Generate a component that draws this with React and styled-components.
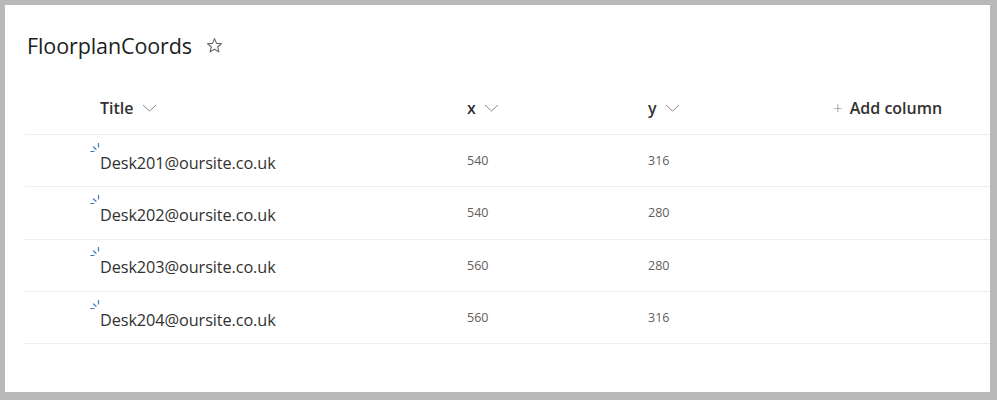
import React from "react";
import styled, { createGlobalStyle } from "styled-components";

const Global = createGlobalStyle`
  html, body { margin: 0; padding: 0; background: #b9b9b9; }
  body { font-family: "Open Sans", "Noto Sans", Arial, sans-serif; }
`;

const Frame = styled.div`
  width: 997px;
  height: 400px;
  box-sizing: border-box;
  padding: 5px 7px 8px 5px;
  background: #b9b9b9;
`;

const Panel = styled.div`
  background: #ffffff;
  height: 100%;
  box-sizing: border-box;
  padding: 25px 0 0 20px;
  display: flex;
  flex-direction: column;
`;

const Heading = styled.div`
  display: flex;
  align-items: center;
  gap: 14px;
  padding-left: 2px;
  height: 30px;
`;

const HeadingText = styled.h1`
  margin: 0;
  font-size: 21.5px;
  font-weight: 400;
  color: #201f1e;
  letter-spacing: -0.1px;
`;

const Table = styled.div`
  margin-top: 27px;
  display: flex;
  flex-direction: column;
`;

const Row = styled.div`
  display: grid;
  grid-template-columns: 75px 367px 181px 185px 1fr;
  align-items: center;
  height: ${(p) => (p.$header ? "48px" : "52.3px")};
  padding-bottom: ${(p) => (p.$header ? "6px" : "0")};
  border-bottom: 1px solid #efeeed;
  box-sizing: border-box;
`;

const HeaderCell = styled.div`
  display: flex;
  align-items: center;
  gap: 8px;
  font-size: 16px;
  font-weight: 600;
  color: #323130;
`;

const AddCol = styled.div`
  display: flex;
  align-items: center;
  gap: 7px;
  font-size: 16px;
  font-weight: 600;
  color: #323130;
`;

const Plus = styled.span`
  color: #8a8886;
  font-weight: 300;
  font-size: 17px;
  line-height: 1;
`;

const TitleCell = styled.div`
  position: relative;
  font-size: 16.3px;
  color: #323130;
  padding-top: 4px;
  letter-spacing: -0.1px;
`;

const NewIcon = styled.svg`
  position: absolute;
  left: -10px;
  top: -5px;
`;

const NumCell = styled.div`
  font-size: 12.5px;
  color: #605e5c;
`;

const Chevron = () => (
  <svg width="15" height="8" viewBox="0 0 15 8">
    <path d="M1 1 L7.5 7 L14 1" fill="none" stroke="#8a8886" strokeWidth="1" />
  </svg>
);

const Star = () => (
  <svg width="17" height="17" viewBox="0 0 16 16">
    <path
      d="M8 1.5 L9.9 6 L14.6 6.3 L11 9.4 L12.1 14 L8 11.5 L3.9 14 L5 9.4 L1.4 6.3 L6.1 6 Z"
      fill="none"
      stroke="#605e5c"
      strokeWidth="1"
      strokeLinejoin="round"
    />
  </svg>
);

const Sparkle = () => (
  <NewIcon width="10" height="10" viewBox="0 0 10 10">
    <path d="M8.5 0.5 L8.5 4" stroke="#3f78c0" strokeWidth="1.2" strokeLinecap="round" />
    <path d="M3.5 4 L6 6.3" stroke="#3f78c0" strokeWidth="1.2" strokeLinecap="round" />
    <path d="M0.8 8.5 L4 8.5" stroke="#3f78c0" strokeWidth="1.2" strokeLinecap="round" />
  </NewIcon>
);

const rows = [
  { t: "Desk201@oursite.co.uk", x: 540, y: 316 },
  { t: "Desk202@oursite.co.uk", x: 540, y: 280 },
  { t: "Desk203@oursite.co.uk", x: 560, y: 280 },
  { t: "Desk204@oursite.co.uk", x: 560, y: 316 },
];

export default function App() {
  return (
    <>
      <Global />
      <Frame>
        <Panel>
          <Heading>
            <HeadingText>FloorplanCoords</HeadingText>
            <Star />
          </Heading>
          <Table>
            <Row $header>
              <div />
              <HeaderCell>
                Title <Chevron />
              </HeaderCell>
              <HeaderCell>
                x <Chevron />
              </HeaderCell>
              <HeaderCell>
                y <Chevron />
              </HeaderCell>
              <AddCol>
                <Plus>+</Plus> Add column
              </AddCol>
            </Row>
            {rows.map((r) => (
              <Row key={r.t}>
                <div />
                <TitleCell>
                  <Sparkle />
                  {r.t}
                </TitleCell>
                <NumCell>{r.x}</NumCell>
                <NumCell>{r.y}</NumCell>
                <div />
              </Row>
            ))}
          </Table>
        </Panel>
      </Frame>
    </>
  );
}
